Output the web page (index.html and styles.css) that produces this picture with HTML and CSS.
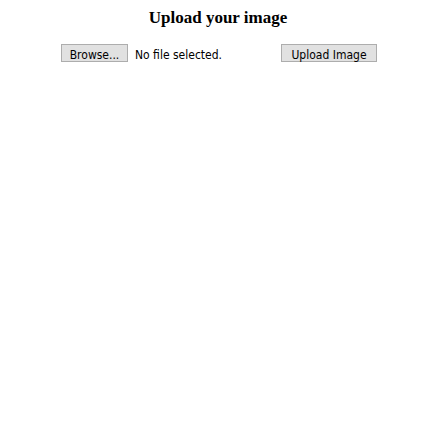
FILE: index.html
```html
<!DOCTYPE html>
<html>
<head>
<meta charset="utf-8">
<link rel="stylesheet" href="styles.css">
</head>
<body>
<div class="page">
  <h3 class="title">Upload your image</h3>
  <form class="upload-form">
    <div class="file-field">
      <span class="btn browse">Browse...</span>
      <span class="file-label">No file selected.</span>
    </div>
    <span class="btn submit">Upload Image</span>
  </form>
</div>
</body>
</html>
```
FILE: styles.css
```css
html, body {
  margin: 0;
  padding: 0;
  background: #ffffff;
}
.page {
  width: 436px;
  padding-top: 8px;
}
.title {
  margin: 0;
  font-family: "Liberation Serif", "Times New Roman", serif;
  font-weight: bold;
  font-size: 17px;
  line-height: 19px;
  text-align: center;
  color: #000;
}
.upload-form {
  margin: 17px 0 0 61px;
  display: flex;
  align-items: center;
  width: 316px;
}
.file-field {
  display: flex;
  align-items: center;
  width: 220px;
}
.btn {
  box-sizing: border-box;
  height: 18px;
  padding-top: 4px;
  display: flex;
  align-items: center;
  justify-content: center;
  background: #e1e1e1;
  border: 1px solid #adadad;
  font-family: "DejaVu Sans Condensed", "DejaVu Sans", Tahoma, sans-serif;
  font-size: 12px;
  line-height: 12px;
  color: #000;
}
.browse {
  width: 67px;
}
.file-label {
  margin-left: 7px;
  padding-top: 4px;
  font-family: "DejaVu Sans Condensed", "DejaVu Sans", Tahoma, sans-serif;
  font-size: 12px;
  line-height: 12px;
  color: #000;
}
.submit {
  width: 96px;
}
```
